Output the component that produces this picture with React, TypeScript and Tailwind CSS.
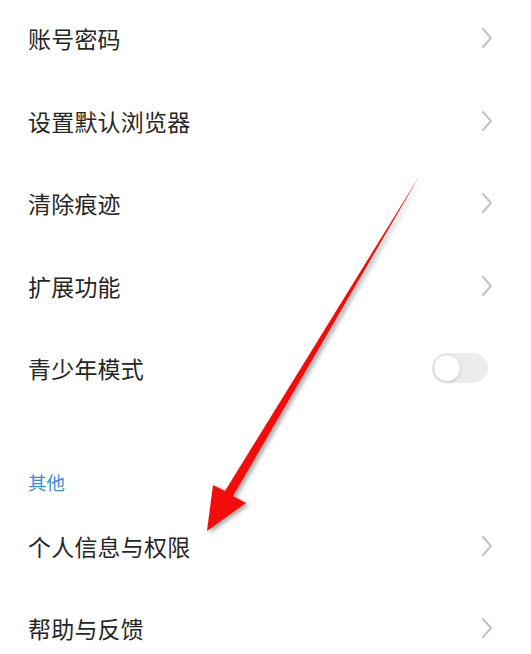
import React from 'react';

const font = { fontFamily: '"Noto Sans CJK SC", "Noto Sans", sans-serif' };

function Chevron() {
  return (
    <svg width="12" height="22" viewBox="0 0 12 22" className="shrink-0">
      <path d="M2 2 L10 11 L2 20" fill="none" stroke="#c2c2c2" strokeWidth="2" strokeLinecap="round" strokeLinejoin="round" />
    </svg>
  );
}

function Toggle() {
  return (
    <div className="w-[56px] h-[30px] rounded-full bg-[#ececec] flex items-center pl-[1px]">
      <div className="w-[28px] h-[28px] rounded-full bg-white border border-[#dcdcdc] shadow-sm" />
    </div>
  );
}

function Row({ label, toggle }: { label: string; toggle?: boolean }) {
  return (
    <div className="h-[82.5px] flex items-center justify-between pl-[28px] pr-[38px]">
      <span className="text-[23px] text-[#262626] tracking-[0.2px]">{label}</span>
      {toggle ? <div className="mr-[5px]"><Toggle /></div> : <Chevron />}
    </div>
  );
}

const App: React.FC = () => {
  return (
    <div className="relative w-[531px] h-[654px] bg-white overflow-hidden" style={font}>
      <div className="-mt-[3px]">
        <Row label="账号密码" />
        <Row label="设置默认浏览器" />
        <Row label="清除痕迹" />
        <Row label="扩展功能" />
        <Row label="青少年模式" toggle />
        <div className="pt-[60px] pb-[10px] pl-[28px] leading-[25px] text-[18.5px] text-[#3d8ad3]">其他</div>
        <Row label="个人信息与权限" />
        <Row label="帮助与反馈" />
      </div>

      {/* 红色箭头标注 */}
      <svg className="absolute left-0 top-0 pointer-events-none" width="531" height="654" viewBox="0 0 531 654">
        <defs>
          <filter id="sh" x="-20%" y="-20%" width="140%" height="140%">
            <feDropShadow dx="3" dy="2" stdDeviation="2" floodColor="#000" floodOpacity="0.35" />
          </filter>
        </defs>
        <polygon
          points="420,175 233,496 246,503 207,531 213,485 225,491"
          fill="#f20d0d"
          filter="url(#sh)"
        />
      </svg>
    </div>
  );
};

export default App;
